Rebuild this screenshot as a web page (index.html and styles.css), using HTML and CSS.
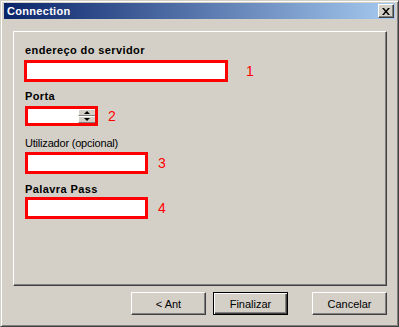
FILE: index.html
```html
<!DOCTYPE html>
<html lang="pt">
<head>
  <meta charset="UTF-8" />
  <meta name="viewport" content="width=device-width, initial-scale=1.0" />
  <title>Connection</title>
  <link rel="stylesheet" href="styles.css">
</head>
<body>
  <div class="window">
    <div class="titlebar">
      <span class="title">Connection</span>
      <button class="close" type="button" aria-label="Fechar">
        <svg width="8" height="7" viewBox="0 0 8 7">
          <path d="M0 0h2l2 2.5L6 0h2L5 3.5 8 7H6L4 4.5 2 7H0l3-3.5z" fill="#000"/>
        </svg>
      </button>
    </div>

    <div class="panel">
      <label class="lbl bold" for="server">endereço do servidor</label>
      <div class="row">
        <input class="field field-wide" id="server" type="text">
        <span class="num num-far">1</span>
      </div>

      <label class="lbl bold lbl-porta" for="port">Porta</label>
      <div class="row row-spin">
        <div class="spin">
          <input class="spin-input" id="port" type="text">
          <div class="spin-btns">
            <span class="spin-btn"><i class="arrow up"></i></span>
            <span class="spin-btn"><i class="arrow down"></i></span>
          </div>
        </div>
        <span class="num">2</span>
      </div>

      <label class="lbl lbl-user" for="user">Utilizador (opcional)</label>
      <div class="row row-user">
        <input class="field" id="user" type="text">
        <span class="num">3</span>
      </div>

      <label class="lbl bold lbl-pass" for="pass">Palavra Pass</label>
      <div class="row row-pass">
        <input class="field" id="pass" type="password">
        <span class="num">4</span>
      </div>
    </div>

    <div class="buttons">
      <button class="btn" type="button">&lt; Ant</button>
      <button class="btn btn-default" type="button">Finalizar</button>
      <button class="btn btn-cancel" type="button">Cancelar</button>
    </div>
  </div>
</body>
</html>
```

FILE: styles.css
```css
body {
  margin: 0;
  font-family: "Liberation Sans", Arial, sans-serif;
  font-size: 11px;
  background: #d4d0c8;
}
.window {
  width: 399px;
  height: 327px;
  box-sizing: border-box;
  background: #d4d0c8;
  border: 1px solid;
  border-color: #d4d0c8 #404040 #404040 #d4d0c8;
  box-shadow: inset 1px 1px #fff, inset -1px -1px #808080;
  padding: 2px 3px;
  display: flex;
  flex-direction: column;
}
.titlebar {
  height: 16px;
  display: flex;
  align-items: center;
  justify-content: space-between;
  padding: 0 1px 0 3px;
  background: linear-gradient(to right, #0a246a, #a6caf0);
}
.title {
  color: #fff;
  font-weight: bold;
  letter-spacing: 0.3px;
}
.close {
  width: 16px;
  height: 14px;
  padding: 0;
  margin: 0;
  display: flex;
  align-items: center;
  justify-content: center;
  background: #d4d0c8;
  border: 1px solid;
  border-color: #fff #404040 #404040 #fff;
  box-shadow: inset -1px -1px #808080;
}
.panel {
  margin: 12px 8px 0 9px;
  height: 255px;
  box-sizing: border-box;
  border: 1px solid;
  border-color: #fff #404040 #404040 #fff;
  box-shadow: inset -1px -1px #808080;
  padding: 12px 0 0 11px;
  display: flex;
  flex-direction: column;
  align-items: flex-start;
}
.lbl {
  display: block;
  line-height: 13px;
  color: #000;
  letter-spacing: -0.2px;
}
.bold {
  font-weight: bold;
  letter-spacing: 0.4px;
}
.lbl-porta {
  margin-top: 8px;
}
.lbl-user {
  margin-top: 11px;
}
.lbl-pass {
  margin-top: 9px;
}
.row {
  display: flex;
  align-items: center;
  margin-top: 3px;
}
.row-user {
  margin-top: 2px;
}
.row-pass {
  margin-top: 1px;
}
.field {
  width: 123px;
  height: 22px;
  box-sizing: border-box;
  border: 3px solid #ff0000;
  background: #fff;
  margin: 0;
  padding: 0 2px;
  font: inherit;
  outline: none;
}
.field-wide {
  width: 204px;
  margin-left: -1px;
}
.num {
  color: #ff0000;
  font-size: 14px;
  margin-left: 10px;
}
.num-far {
  margin-left: 18px;
}
.spin {
  width: 73px;
  height: 20px;
  box-sizing: border-box;
  border: 3px solid #ff0000;
  display: flex;
  background: #fff;
}
.spin-input {
  flex: 1;
  min-width: 0;
  border: none;
  margin: 0;
  padding: 0 2px;
  font: inherit;
  outline: none;
}
.spin-btns {
  width: 17px;
  display: flex;
  flex-direction: column;
}
.spin-btn {
  flex: 1;
  display: flex;
  align-items: center;
  justify-content: center;
  background: #d4d0c8;
  border-top: 1px solid #fff;
  border-left: 1px solid #fff;
  border-bottom: 1px solid #808080;
}
.arrow {
  width: 0;
  height: 0;
  border-left: 3px solid transparent;
  border-right: 3px solid transparent;
}
.arrow.up {
  border-bottom: 3px solid #000;
}
.arrow.down {
  border-top: 3px solid #000;
}
.buttons {
  display: flex;
  justify-content: flex-end;
  margin: 6px 8px 0 0;
}
.btn {
  width: 75px;
  height: 23px;
  margin: 0 0 0 7px;
  padding: 0;
  font: inherit;
  color: #000;
  background: #d4d0c8;
  border: 1px solid;
  border-color: #fff #404040 #404040 #fff;
  box-shadow: inset -1px -1px #808080;
}
.btn-default {
  border-color: #000;
  box-shadow: inset 1px 1px #fff, inset -1px -1px #404040, inset -2px -2px #808080;
}
.btn-cancel {
  margin-left: 24px;
}
```
